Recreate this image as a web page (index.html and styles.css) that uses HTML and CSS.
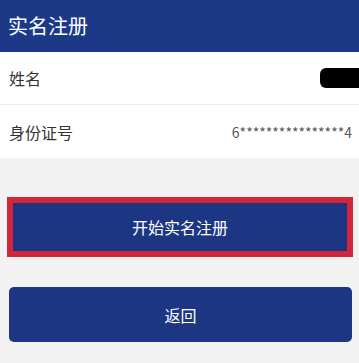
FILE: index.html
```html
<!DOCTYPE html>
<html lang="zh-CN">

<head>
    <meta charset="UTF-8">
    <meta name="viewport" content="width=device-width, initial-scale=1.0">
    <title>实名注册</title>
    <link rel="stylesheet" href="styles.css">
</head>

<body>
    <div class="header">实名注册</div>
    <div class="info">
        <div class="row">
            <span class="label">姓名</span>
            <span class="mask"></span>
        </div>
        <div class="row">
            <span class="label">身份证号</span>
            <span class="value">6****************4</span>
        </div>
    </div>
    <div class="actions">
        <div class="highlight">
            <button class="btn btn-start">开始实名注册</button>
        </div>
        <button class="btn btn-back">返回</button>
    </div>
</body>

</html>
```

FILE: styles.css
```css
* {
    box-sizing: border-box;
}

body {
    margin: 0;
    padding: 0;
    background: #f2f2f2;
    font-family: "Noto Sans CJK SC", "Noto Sans", sans-serif;
    color: #333;
}

.header {
    height: 52px;
    background: #1d3886;
    color: #fff;
    font-size: 20px;
    line-height: 52px;
    padding-left: 8px;
}

.info {
    background: #fff;
}

.row {
    display: flex;
    align-items: center;
    justify-content: space-between;
    height: 53px;
    padding: 0 7px 0 9px;
    border-bottom: 1px solid #ececec;
}

.row:last-child {
    height: 53px;
    border-bottom: 0;
}

.label {
    font-size: 16px;
}

.mask {
    width: 39px;
    height: 20px;
    background: #000;
    border-radius: 6px 0 0 6px;
    margin-right: -7px;
}

.value {
    font-size: 14px;
    color: #555;
}

.actions {
    padding: 39px 7px 0 7px;
}

.highlight {
    border: 6px solid #d3263a;
    margin-right: -1px;
}

.btn {
    display: block;
    width: 100%;
    border: 0;
    color: #fff;
    font-family: inherit;
    font-size: 16px;
    background: #1c3684;
}

.btn-start {
    height: 48px;
}

.btn-back {
    margin: 30px 0 0 2px;
    width: 343px;
    height: 55px;
    border-radius: 5px;
}
```
